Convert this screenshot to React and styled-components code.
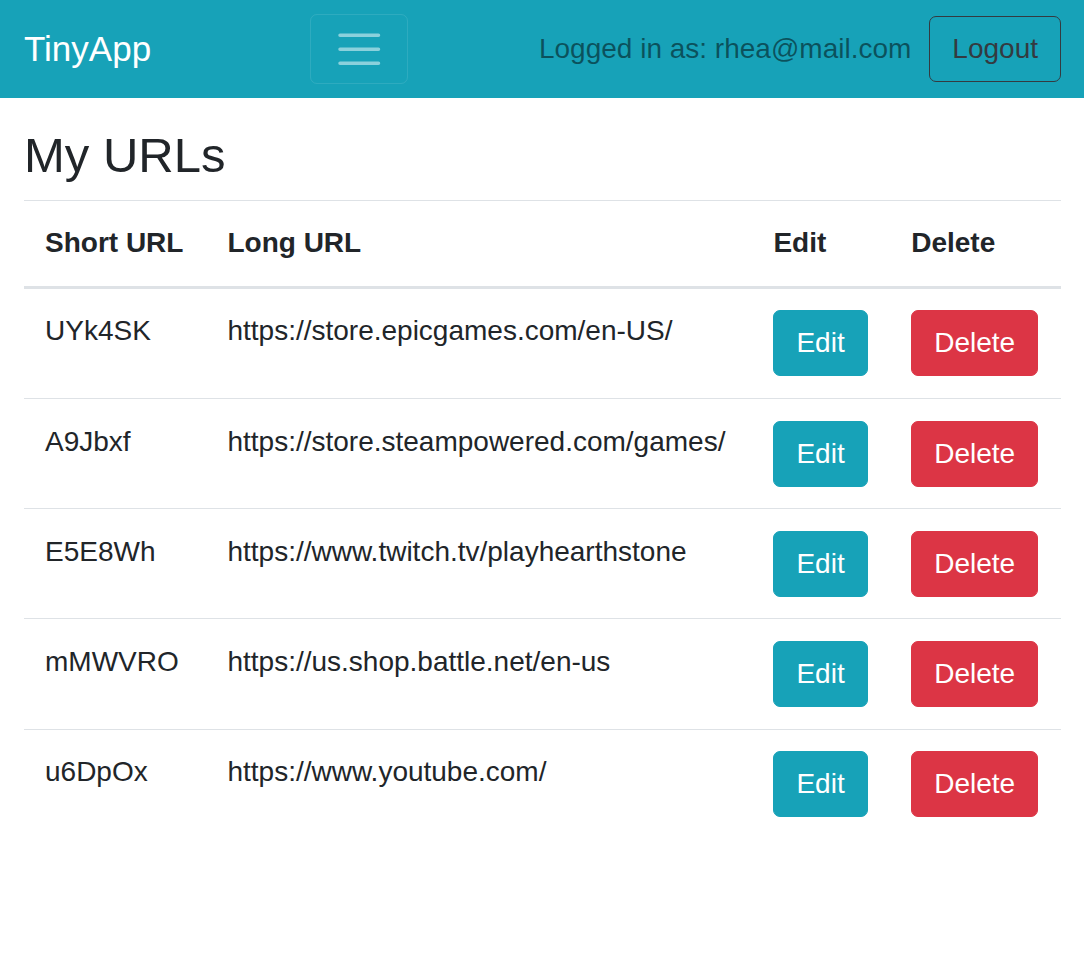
import React from "react";
import styled, { createGlobalStyle } from "styled-components";

const GlobalStyle = createGlobalStyle`
  * {
    box-sizing: border-box;
  }
  body {
    margin: 0;
    background: #fff;
    color: #212529;
    font-family: "Liberation Sans", Arial, sans-serif;
    font-size: 28px;
    line-height: 1.5;
  }
`;

const Navbar = styled.nav`
  height: 98px;
  padding: 0 23px 0 24px;
  background: #17a2b8;
  display: flex;
  align-items: center;
  justify-content: space-between;
`;

const Brand = styled.a`
  font-size: 35px;
  line-height: 1.5;
  color: #fff;
  text-decoration: none;
  margin-right: 28px;
`;

const Toggler = styled.button`
  width: 98px;
  height: 70px;
  padding: 7px 21px;
  background: transparent;
  border: 1.75px solid rgba(255, 255, 255, 0.1);
  border-radius: 7px;
  display: flex;
  align-items: center;
  justify-content: center;
  svg {
    width: 52.5px;
    height: 52.5px;
    display: block;
  }
`;

const UserBox = styled.div`
  display: flex;
  align-items: center;
  gap: 18px;
`;

const NavText = styled.span`
  color: rgba(0, 0, 0, 0.5);
  font-size: 28px;
`;

const Button = styled.button`
  font-family: inherit;
  font-size: 28px;
  line-height: 1.5;
  padding: 11px 22px;
  border-radius: 7px;
  border: 1px solid ${({ $bg, $outline }) => $outline || $bg};
  background: ${({ $bg }) => $bg || "transparent"};
  color: ${({ $color }) => $color || "#fff"};
  cursor: pointer;
  white-space: nowrap;
`;

const Main = styled.main`
  padding: 27.5px 23px 0 24px;
`;

const Title = styled.h3`
  margin: 0 0 15.5px;
  font-size: 49px;
  font-weight: 500;
  line-height: 1.2;
`;

const Table = styled.table`
  width: 100%;
  border-collapse: collapse;
`;

const Th = styled.th`
  text-align: left;
  vertical-align: bottom;
  font-weight: 700;
  padding: 21.5px 21px;
  border-top: 1px solid #dee2e6;
  border-bottom: 3px solid #dee2e6;
`;

const Td = styled.td`
  vertical-align: top;
  padding: 21.6px 21px;
  border-top: 1px solid #dee2e6;
  white-space: nowrap;
`;

const MenuIcon = () => (
  <svg viewBox="0 0 30 30">
    <path
      d="M4 7h22M4 15h22M4 23h22"
      stroke="rgba(255,255,255,0.5)"
      strokeWidth="2"
      strokeLinecap="round"
      strokeMiterlimit="10"
    />
  </svg>
);

const urls = [
  ["UYk4SK", "https://store.epicgames.com/en-US/"],
  ["A9Jbxf", "https://store.steampowered.com/games/"],
  ["E5E8Wh", "https://www.twitch.tv/playhearthstone"],
  ["mMWVRO", "https://us.shop.battle.net/en-us"],
  ["u6DpOx", "https://www.youtube.com/"],
];

const App = () => {
  return (
    <>
      <GlobalStyle />
      <Navbar>
        <Brand href="#">TinyApp</Brand>
        <Toggler aria-label="Toggle navigation">
          <MenuIcon />
        </Toggler>
        <UserBox>
          <NavText>Logged in as: rhea@mail.com</NavText>
          <Button $outline="#343a40" $color="#343a40">
            Logout
          </Button>
        </UserBox>
      </Navbar>
      <Main>
        <Title>My URLs</Title>
        <Table>
          <thead>
            <tr>
              <Th>Short URL</Th>
              <Th>Long URL</Th>
              <Th>Edit</Th>
              <Th>Delete</Th>
            </tr>
          </thead>
          <tbody>
            {urls.map(([short, long]) => (
              <tr key={short}>
                <Td>{short}</Td>
                <Td>{long}</Td>
                <Td>
                  <Button $bg="#17a2b8">Edit</Button>
                </Td>
                <Td>
                  <Button $bg="#dc3545">Delete</Button>
                </Td>
              </tr>
            ))}
          </tbody>
        </Table>
      </Main>
    </>
  );
};

export default App;
